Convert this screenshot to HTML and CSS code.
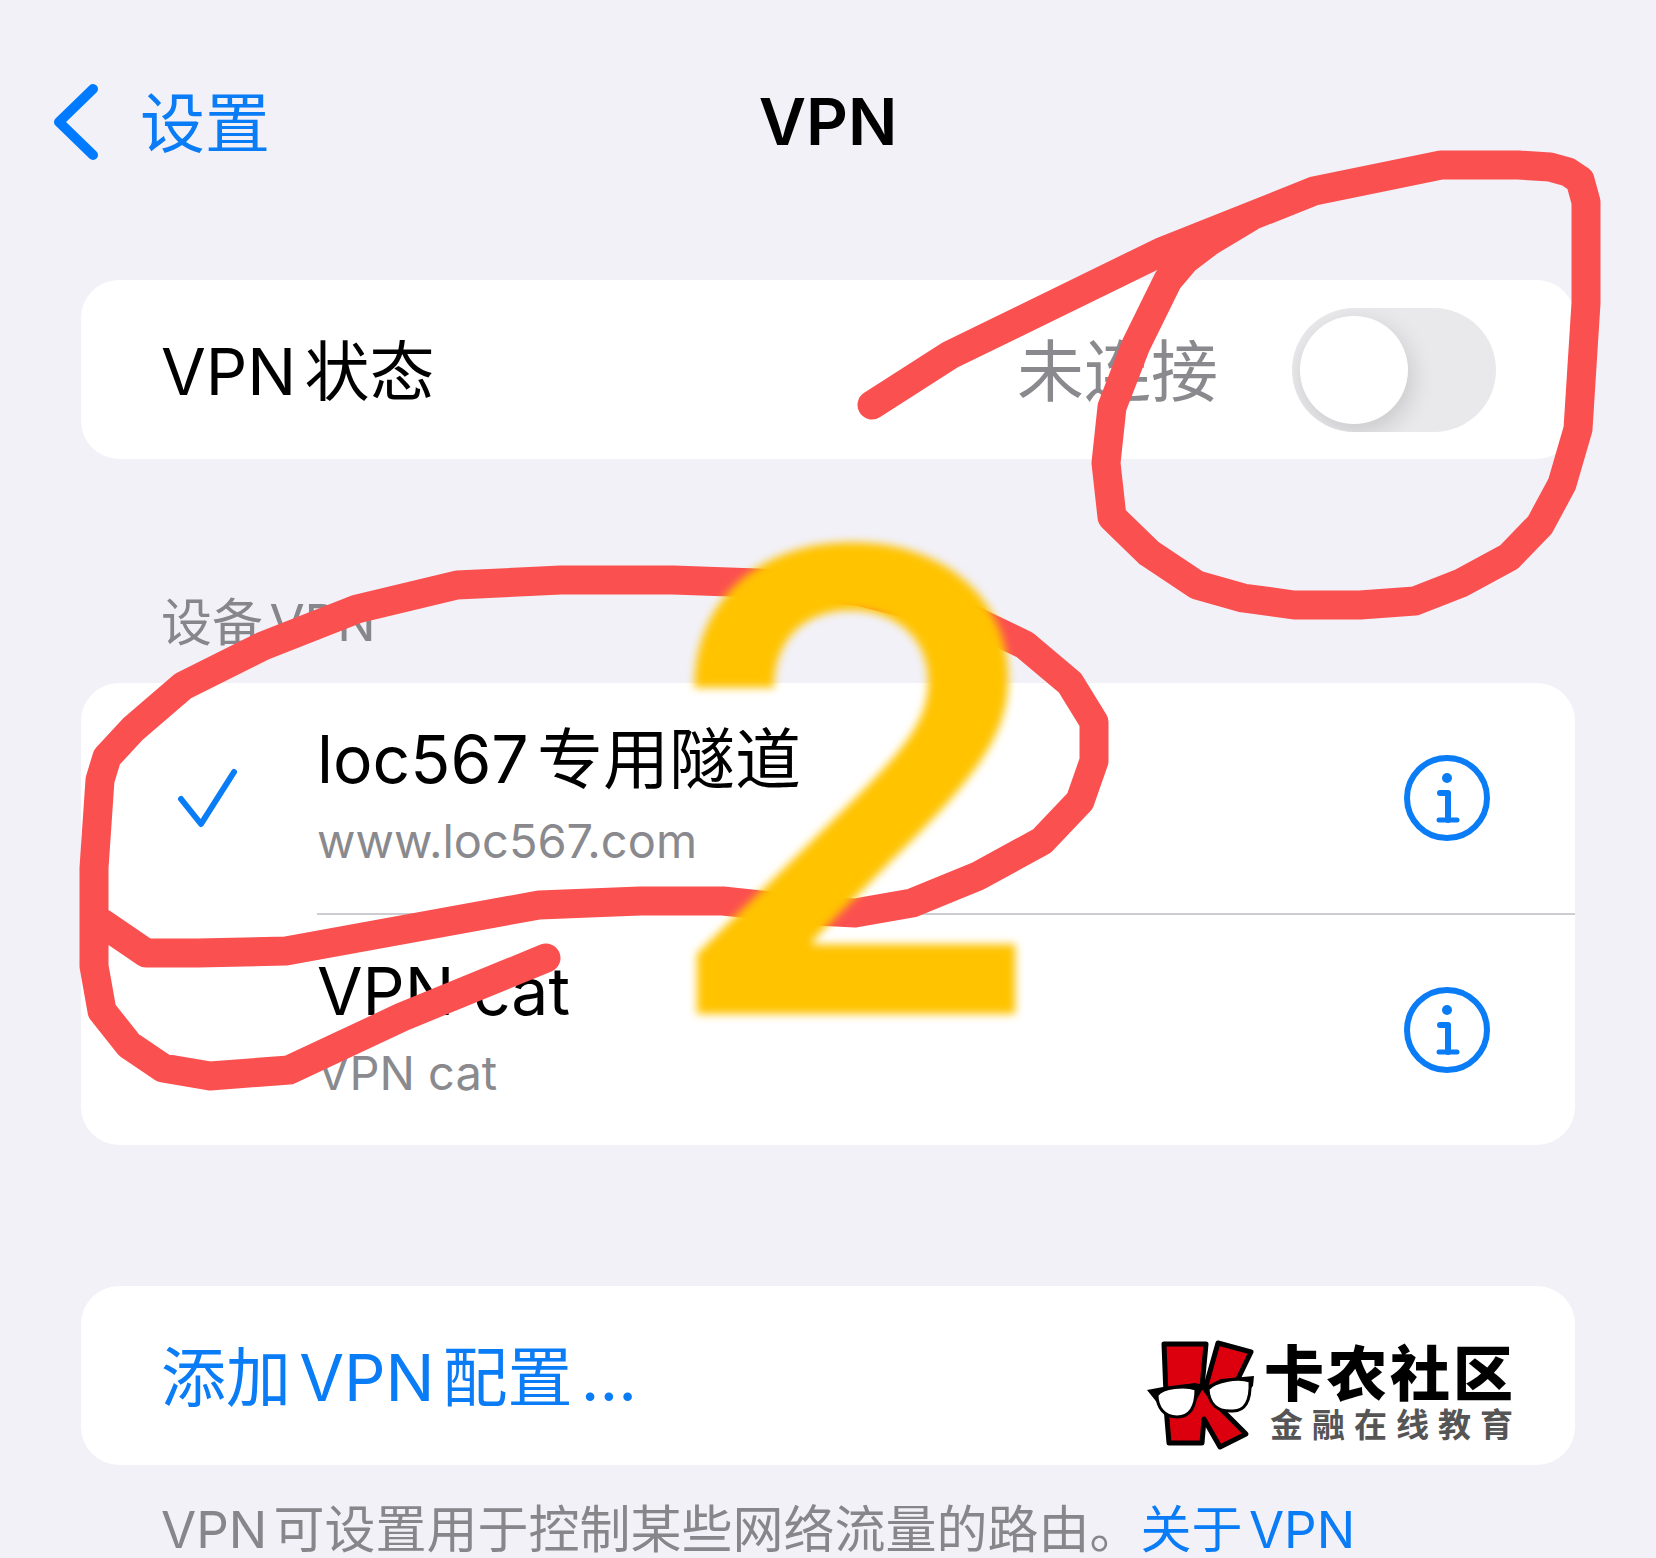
FILE: index.html
```
<!DOCTYPE html>
<html lang="zh-CN">
<head>
<meta charset="utf-8">
<meta name="viewport" content="width=device-width, initial-scale=1">
<title>VPN</title>
<link rel="stylesheet" href="styles.css">
</head>
<body>
<div class="screen">
  <header class="nav">
    <a class="back" href="#settings">
      <svg class="chevron" viewBox="0 0 48 80" aria-hidden="true"><path d="M41 7 7 40l34 33"/></svg>
      <span class="back-text">设置</span>
    </a>
    <h1 class="title">VPN</h1>
  </header>

  <main class="content">
    <section class="card row">
      <label class="label" for="vpn-status">VPN状态</label>
      <span class="value">未连接</span>
      <input class="switch" id="vpn-status" type="checkbox" role="switch">
    </section>

    <h2 class="section-title">设备VPN</h2>
    <ul class="card list">
      <li class="item">
        <svg class="check" viewBox="0 0 60 60" aria-hidden="true"><path d="M4 31 24 56 57 4"/></svg>
        <div class="item-body">
          <div class="texts">
            <span class="name">loc567专用隧道</span>
            <span class="detail">www.loc567.com</span>
          </div>
          <button class="info" type="button" aria-label="loc567专用隧道">
            <svg viewBox="0 0 86 86" aria-hidden="true"><circle class="ring" cx="43" cy="43" r="40"/><circle class="dot" cx="43" cy="23" r="5"/><path class="stem" d="M36 38h8v27"/><path class="foot" d="M35 65h18"/></svg>
          </button>
        </div>
      </li>
      <li class="item">
        <div class="item-body">
          <div class="texts">
            <span class="name">VPN cat</span>
            <span class="detail">VPN cat</span>
          </div>
          <button class="info" type="button" aria-label="VPN cat">
            <svg viewBox="0 0 86 86" aria-hidden="true"><circle class="ring" cx="43" cy="43" r="40"/><circle class="dot" cx="43" cy="23" r="5"/><path class="stem" d="M36 38h8v27"/><path class="foot" d="M35 65h18"/></svg>
          </button>
        </div>
      </li>
    </ul>

    <section class="card row add">
      <button class="add-button" type="button">添加VPN配置...</button>
      <div class="brand">
        <svg class="brand-mark" viewBox="0 0 108 112" aria-hidden="true">
          <g class="k">
            <path d="M17 5 59 5 55 48 19 56Z"/>
            <path d="M71 4 104 13 89 44 58 50Z"/>
            <path d="M19 68 46 62 55 46 68 64 99 95 73 108 57 80 55 104 22 104Z"/>
          </g>
          <path class="temple" d="M0 51 16 48 48 44 60 47 74 40 107 37 106 47 101 52 100 42 62 52 48 50 10 54 12 66Z"/>
          <path class="lens" d="M10 56C16 48 38 46 49 50C49 70 42 78 30 78C17 78 10 68 10 56Z"/>
          <path class="lens" d="M61 50C68 42 90 38 103 42C104 62 98 72 86 72C70 73 62 65 61 50Z"/>
        </svg>
        <div class="brand-text">
          <span class="brand-name">卡农社区</span>
          <span class="brand-sub">金融在线教育</span>
        </div>
      </div>
    </section>
    <p class="note">VPN可设置用于控制某些网络流量的路由。<a href="#about">关于VPN</a></p>
  </main>

  <svg class="markup" viewBox="0 0 1656 1558" aria-hidden="true">
    <path class="pen" d="M872 405 950 355 1161 252 1314 191 1441 165H1518L1550 167 1568 172 1580 180 1586 202V303L1578 429 1562 484 1540 525 1509 557 1461 583 1415 601 1360 605H1294L1243 598 1197 585 1149 553 1112 517 1106 463 1112 407 1136 345 1168 280 1185 260 1210 241 1250 217"/>
    <path class="pen" d="M546 958 402 1017 289 1070 210 1076 163 1068 129 1045 102 1011 94 966V868L100 780 107 757 133 729 183 686 263 646 357 609 457 585 561 580H673L757 583 857 591 973 620 1025 645 1070 683 1094 722V761L1080 801 1042 841 978 876 912 903 855 913 817 911 723 901H640L539 905 286 951 198 953H146L102 923"/>
    <text class="step" x="655" y="1014">2</text>
  </svg>
</div>
</body>
</html>
```
FILE: styles.css
```
* {
  box-sizing: border-box;
}

body {
  margin: 0;
  background: #f2f1f8;
  color: #000;
  font-family: Inter, "Noto Sans CJK SC", sans-serif;
  font-size: 65px;
  line-height: 80px;
  text-autospace: normal;
}

a {
  color: #0a7cf5;
  text-decoration: none;
}

button {
  padding: 0;
  border: 0;
  background: none;
  color: #0a7cf5;
  font: inherit;
}

.screen {
  position: relative;
}

.nav {
  display: grid;
  grid-template-columns: 1fr auto 1fr;
  align-items: center;
  height: 280px;
  padding: 0 52px 36px;
}

.back {
  display: flex;
  align-items: center;
  gap: 40px;
}

.chevron {
  width: 48px;
  height: 80px;
  fill: none;
  stroke: #007aff;
  stroke-width: 10;
  stroke-linecap: round;
  stroke-linejoin: round;
}

.title {
  margin: 0;
  font-size: 65px;
  font-weight: 600;
}

.content {
  padding: 0 81px;
}

.card {
  margin: 0;
  border-radius: 38px;
  background: #fff;
}

.row {
  display: flex;
  align-items: center;
  min-height: 179px;
  padding: 0 79px 0 80px;
}

.back-text,
.label,
.value,
.add-button {
  padding-top: 4px;
}

.label {
  flex: 1;
}

.value {
  margin-right: 74px;
  color: #8a8a8e;
  font-size: 67px;
}

.switch {
  display: flex;
  align-items: center;
  width: 204px;
  height: 124px;
  margin: 0;
  padding: 8px;
  overflow: hidden;
  appearance: none;
  border-radius: 62px;
  background: #e9e9eb;
}

.switch::before {
  width: 108px;
  height: 108px;
  border-radius: 50%;
  background: #fff;
  box-shadow: 4px 8px 24px rgba(0, 0, 0, 0.14);
  content: "";
}

.switch:checked {
  justify-content: flex-end;
  background: #34c759;
}

.section-title {
  margin: 0;
  padding: 132px 80px 28px;
  color: #86868b;
  font-size: 51px;
  font-weight: 400;
  line-height: 64px;
}

.list {
  padding: 0;
  list-style: none;
}

.item {
  display: grid;
  grid-template-columns: 236px 1fr;
  align-items: center;
}

.check {
  width: 60px;
  height: 60px;
  margin-left: 96px;
  fill: none;
  stroke: #0a7cf5;
  stroke-width: 6;
  stroke-linecap: round;
  stroke-linejoin: round;
}

.item-body {
  display: flex;
  grid-column: 2;
  align-items: center;
  justify-content: space-between;
  min-height: 230px;
  padding-right: 85px;
}

.item + .item .item-body {
  min-height: 232px;
  border-top: 2px solid #cdcdd1;
}

.texts {
  display: flex;
  flex-direction: column;
  gap: 10px;
  padding-bottom: 4px;
}

.name {
  font-size: 66px;
}

.detail {
  color: #8a8a8e;
  font-size: 47px;
  line-height: 64px;
}

.info {
  width: 86px;
  height: 86px;
}

.info svg {
  display: block;
  fill: none;
  stroke: #0a7cf5;
  stroke-linecap: round;
  stroke-linejoin: round;
}

.ring,
.stem {
  stroke-width: 6;
}

.foot {
  stroke-width: 5;
}

.dot {
  fill: #0a7cf5;
  stroke: none;
}

.add {
  position: relative;
  margin-top: 141px;
}

.brand {
  position: absolute;
  right: 62px;
  bottom: 14px;
  display: flex;
  align-items: center;
  gap: 9px;
}

.brand-mark {
  width: 108px;
  height: 112px;
}

.k {
  fill: #dc000f;
  stroke: #000;
  stroke-width: 5;
  stroke-linejoin: round;
}

.temple {
  fill: #000;
}

.lens {
  fill: #fff;
  stroke: #000;
  stroke-width: 3;
}

.brand-text {
  display: flex;
  flex-direction: column;
  width: 249px;
}

.brand-name {
  font-size: 60px;
  font-weight: 900;
  line-height: 60px;
  text-align-last: justify;
}

.brand-sub {
  padding-left: 6px;
  color: #555;
  font-size: 33px;
  font-weight: 700;
  line-height: 42px;
  text-align-last: justify;
}

.note {
  margin: 0;
  padding: 37px 0 0 80px;
  color: #86868b;
  font-size: 51px;
  line-height: 56px;
}

.markup {
  position: absolute;
  top: 0;
  left: 0;
  width: 100%;
  pointer-events: none;
}

.pen {
  fill: none;
  stroke: #fb5050;
  stroke-width: 29;
  stroke-linecap: round;
  stroke-linejoin: round;
}

.step {
  fill: #ffc300;
  filter: blur(4px);
  font-family: Inter, sans-serif;
  font-size: 640px;
  font-weight: 600;
}
```
